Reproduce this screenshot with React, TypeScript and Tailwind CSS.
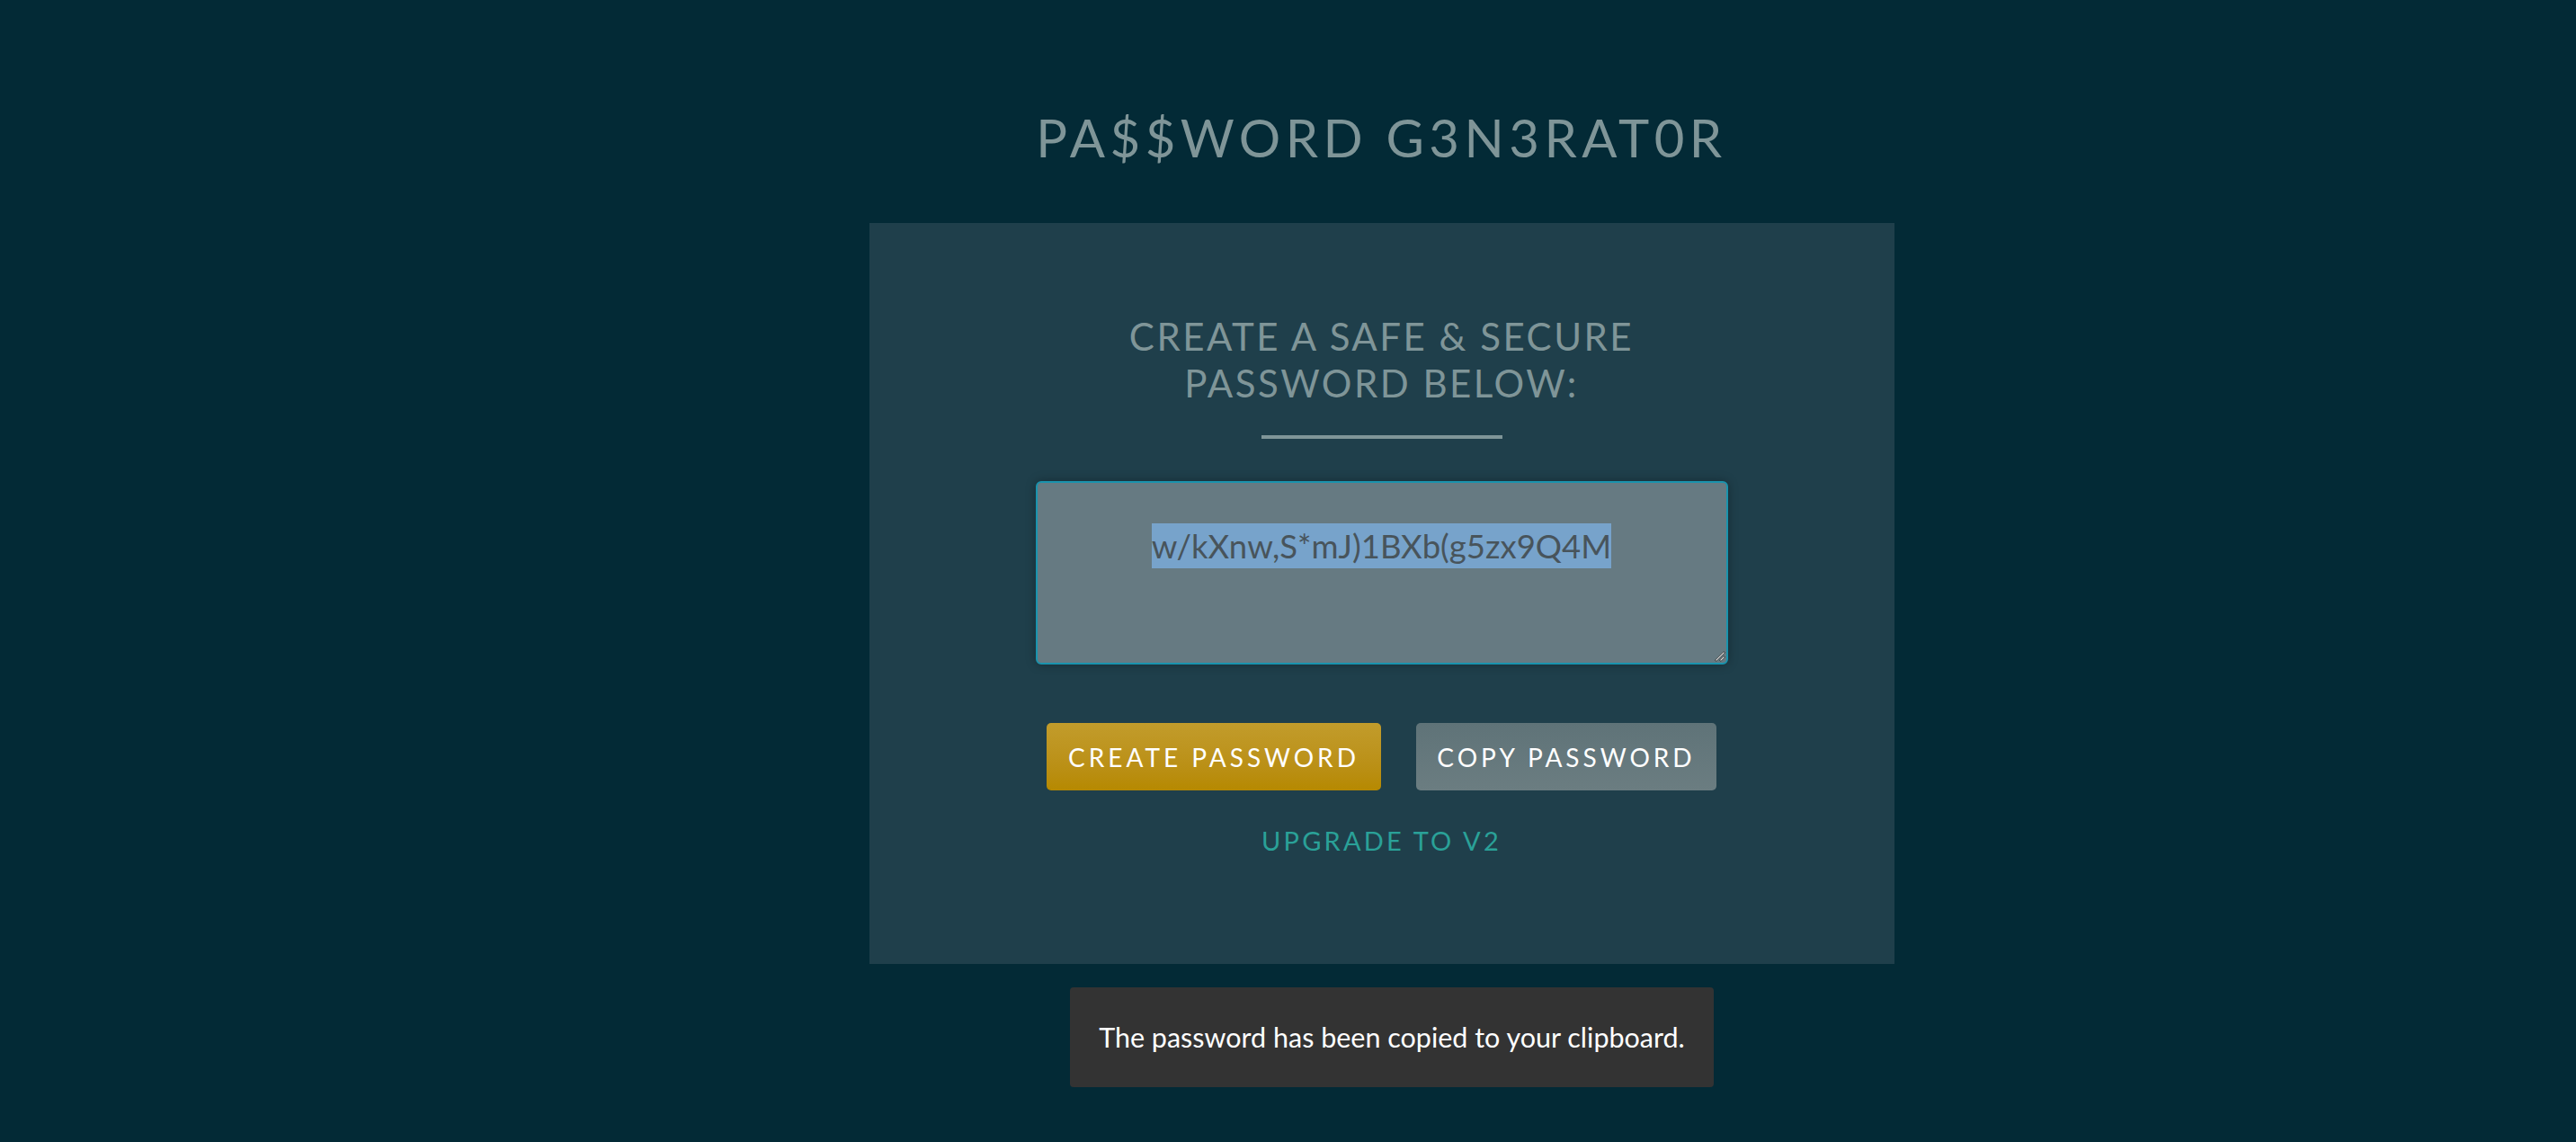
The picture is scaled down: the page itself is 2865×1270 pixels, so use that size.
export default function App() {
  const password = "w/kXnw,S*mJ)1BXb(g5zx9Q4M";

  return (
    <div className="min-h-screen bg-[#032a36] font-['Lato',sans-serif]">
      <div className="flex flex-col items-center pl-[208px] pt-[118px]">
        <h1 className="h-[70px] text-[58px] leading-[70px] font-normal tracking-[5.5px] text-[#7f9598]">
          PA$$WORD G3N3RAT0R
        </h1>

        <div className="mt-[60px] flex h-[824px] w-[1140px] flex-col items-center bg-[#1f3f4b] pt-[100px]">
          <h2 className="text-center text-[42px] leading-[52px] font-normal tracking-[2.5px] text-[#7f9598]">
            CREATE A SAFE &amp; SECURE
            <br />
            PASSWORD BELOW:
          </h2>

          <div className="mt-[32px] h-[4px] w-[268px] bg-[#7f9598]" />

          {/* looks like a focused textarea with the password selected */}
          <div className="relative mt-[47px] h-[204px] w-[770px] rounded-[6px] border-2 border-[#1a93ad] bg-[#667a82] pt-[45px] text-center shadow-[0_0_12px_rgba(0,0,0,0.3)]">
            <span className="inline-block h-[50px] bg-[#77a3cb] text-[36.5px] leading-[50px] text-[#48545b]">
              {password}
            </span>
            <svg
              className="absolute right-[1px] bottom-[1px] h-[14px] w-[14px]"
              viewBox="0 0 14 14"
            >
              <path d="M13 3 L3 13" stroke="#2b2b2b" strokeWidth={2.4} />
              <path d="M12.5 3.5 L3.5 12.5" stroke="#dde1e2" strokeWidth={1.1} />
              <path d="M13 8 L8 13" stroke="#2b2b2b" strokeWidth={2.4} />
              <path d="M12.5 8.5 L8.5 12.5" stroke="#dde1e2" strokeWidth={1.1} />
            </svg>
          </div>

          <div className="mt-[65px] flex gap-[39px]">
            <button className="h-[75px] w-[372px] rounded-[5px] bg-gradient-to-b from-[#c29c2b] to-[#b68900] text-[28px] tracking-[4px] text-white">
              CREATE PASSWORD
            </button>
            <button className="h-[75px] w-[334px] rounded-[5px] bg-gradient-to-b from-[#5f7378] to-[#6b7d81] text-[28px] tracking-[4px] text-white">
              COPY PASSWORD
            </button>
          </div>

          <a className="mt-[36px] text-[29px] leading-[40px] tracking-[3.2px] text-[#2aa198]">
            UPGRADE TO V2
          </a>
        </div>
      </div>

      <div className="fixed top-[1098px] left-[1190px] flex h-[111px] w-[716px] items-center justify-center rounded-[4px] bg-[#333333] text-[30.5px] text-white">
        The password has been copied to your clipboard.
      </div>
    </div>
  );
}
